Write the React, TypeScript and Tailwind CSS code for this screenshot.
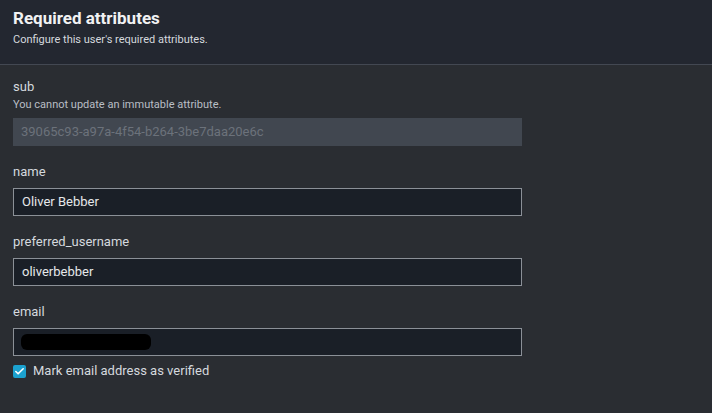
import { Check } from "lucide-react";

function Field({ label, children }: { label: string; children: React.ReactNode }) {
  return (
    <div className="mb-[16px]">
      <div className="text-[13px] leading-[20px] text-[#d5d9de] mb-[6px]">{label}</div>
      {children}
    </div>
  );
}

function TextBox({ value }: { value: string }) {
  return (
    <div className="h-[28px] w-[509px] border border-[#8b9097] bg-[#1a1f27] px-2 flex items-center text-[13px] text-[#e6e8ea]">
      {value}
    </div>
  );
}

export default function App() {
  return (
    <div
      className="w-[712px] h-[413px] bg-[#2a2d32] overflow-hidden"
      style={{ fontFamily: "Roboto, 'Noto Sans', sans-serif" }}
    >
      <div className="h-[65px] bg-[#232730] border-b border-[#434852] px-[13px] pt-[7px]">
        <h2 className="text-[17px] leading-[22px] font-bold text-[#f1f2f3]">Required attributes</h2>
        <p className="text-[11px] leading-[16px] text-[#d5d9de] mt-[3px]">Configure this user's required attributes.</p>
      </div>

      <div className="px-[13px] pt-[12px]">
        <div className="mb-[16px]">
          <div className="text-[13px] leading-[20px] text-[#d5d9de]">sub</div>
          <div className="text-[11px] leading-[16px] text-[#b9bec5] mb-[5px]">You cannot update an immutable attribute.</div>
          <div className="h-[28px] w-[509px] bg-[#414750] px-2 flex items-center text-[13px] text-[#6c727b]">
            39065c93-a97a-4f54-b264-3be7daa20e6c
          </div>
        </div>

        <Field label="name">
          <TextBox value="Oliver Bebber" />
        </Field>

        <Field label="preferred_username">
          <TextBox value="oliverbebber" />
        </Field>

        <div>
          <div className="text-[13px] leading-[20px] text-[#d5d9de] mb-[6px]">email</div>
          <div className="h-[28px] w-[509px] border border-[#8b9097] bg-[#1a1f27] pl-[7px] flex items-center">
            <span className="block h-[16px] w-[130px] rounded-[6px] bg-black" />
          </div>
          <label className="mt-[7px] flex items-center gap-[7px] text-[13px] leading-[16px] text-[#d5d9de]">
            <span className="w-[13px] h-[13px] rounded-[2px] bg-[#1ba1cf] flex items-center justify-center">
              <Check className="w-[11px] h-[11px] text-white" strokeWidth={3.5} />
            </span>
            Mark email address as verified
          </label>
        </div>
      </div>
    </div>
  );
}
